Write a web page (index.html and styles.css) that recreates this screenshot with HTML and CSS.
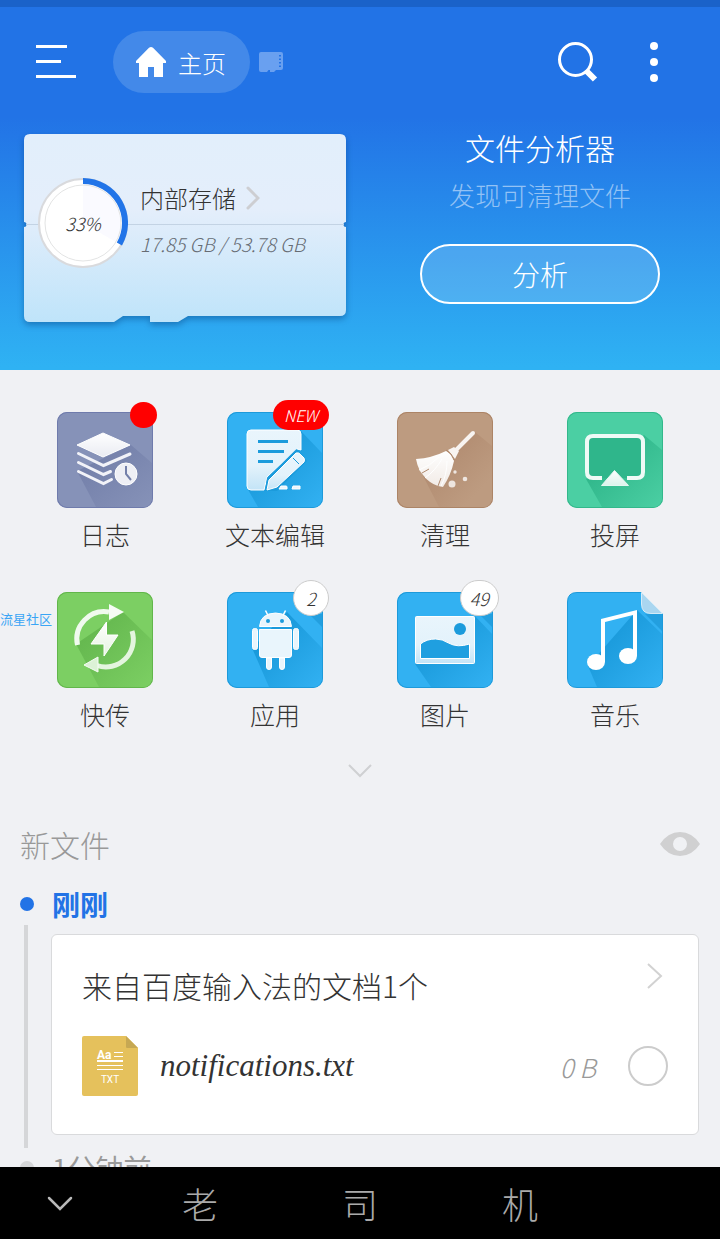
FILE: index.html
```html
<!DOCTYPE html>
<html lang="zh-CN">
<head>
<meta charset="utf-8">
<title>主页</title>
<meta name="viewport" content="width=device-width, initial-scale=1">
<link rel="stylesheet" href="styles.css">
</head>

<body>
<!-- shared gradients for the tile icons -->
<svg class="defs" width="0" height="0" aria-hidden="true">
  <defs>
    <linearGradient id="white" x1="0" y1="0" x2="0" y2="1">
      <stop offset="0" stop-color="#fff"/>
      <stop offset="1" stop-color="#fff" stop-opacity=".82"/>
    </linearGradient>
    <linearGradient id="paper" x1="0" y1="0" x2="0" y2="1">
      <stop offset="0" stop-color="#e9f5fc"/>
      <stop offset=".6" stop-color="#e3f2fb"/>
      <stop offset="1" stop-color="#c3e4f7"/>
    </linearGradient>
    <linearGradient id="shade-blue" x1="0" y1="0" x2="1" y2="1">
      <stop offset=".2" stop-color="#1797d8"/>
      <stop offset="1" stop-color="#32b1f2"/>
    </linearGradient>
    <linearGradient id="shade-purple" x1="0" y1="0" x2="1" y2="1">
      <stop offset=".2" stop-color="#7480aa"/>
      <stop offset="1" stop-color="#8692b8"/>
    </linearGradient>
    <linearGradient id="shade-brown" x1="0" y1="0" x2="1" y2="1">
      <stop offset=".2" stop-color="#b08a6f"/>
      <stop offset=".8" stop-color="#bd9b80"/>
    </linearGradient>
    <linearGradient id="shade-teal" x1="0" y1="0" x2="1" y2="1">
      <stop offset=".2" stop-color="#2db488"/>
      <stop offset="1" stop-color="#4bcfa3"/>
    </linearGradient>
    <linearGradient id="shade-green" x1="0" y1="0" x2="1" y2="1">
      <stop offset=".2" stop-color="#65b84f"/>
      <stop offset="1" stop-color="#7ccf63"/>
    </linearGradient>
    <linearGradient id="card" x1="0" y1="0" x2="0" y2="1">
      <stop offset="0" stop-color="#e2effb"/>
      <stop offset=".4" stop-color="#e4eefb"/>
      <stop offset="1" stop-color="#bfe4fa"/>
    </linearGradient>
  </defs>
</svg>

<main>
  <header>
    <div class="toolbar">
      <button type="button" class="icon-btn" aria-label="菜单">
        <svg width="40" height="34" viewBox="0 0 40 34" fill="#fff">
          <path d="M0 0h31v3H0zM0 15h25v3H0zM0 30h40v3H0z"/>
        </svg>
      </button>
      <button type="button" class="tab">
        <svg width="30" height="30" viewBox="0 0 30 30">
          <path fill="#fff" d="M13 .8q2-1.600 4 0l13 13.200v2h-3v14h-9V20h-6v10H3V16H0v-2z"/>
        </svg>
        主页
      </button>
      <button type="button" class="icon-btn" aria-label="存储卡">
        <svg width="24" height="20" viewBox="0 0 24 20">
          <path fill="#69a0f0" d="M2 0h20q2 0 2 2v14q0 2-2 2h-5l-2 2h-4v-2H9.500l-1.500 2H2q-2 0-2-2V2q0-2 2-2z"/>
          <path stroke="#2273e6" stroke-width="2" stroke-dasharray="1.500 2" d="M21 3v12"/>
        </svg>
      </button>
      <span class="spacer"></span>
      <button type="button" class="icon-btn" aria-label="搜索">
        <svg width="42" height="42" viewBox="0 0 42 42" fill="none" stroke="#fff">
          <circle cx="17.500" cy="18.500" r="16" stroke-width="3"/>
          <path stroke-width="6" d="M28 29.500l9 9"/>
        </svg>
      </button>
      <button type="button" class="icon-btn more" aria-label="更多">
        <svg width="8" height="40" viewBox="0 0 8 40" fill="#fff">
          <circle cx="4" cy="4" r="4"/><circle cx="4" cy="20" r="4"/><circle cx="4" cy="36" r="4"/>
        </svg>
      </button>
    </div>

    <div class="panels">
      <a class="storage" href="#">
        <svg class="storage-bg" width="322" height="188" viewBox="0 0 322 188">
          <path fill="url(#card)" d="M6 0h310q6 0 6 6v82a2.500 2.500 0 0 0 0 5v83q0 6-6 6H164l-10 6h-28v-6H99l-9 6H6q-6 0-6-6V93a2.500 2.500 0 0 0 0-5V6q0-6 6-6z"/>
          <path stroke="#c3d3e4" d="M2 90.500h318"/>
        </svg>
        <span class="usage">
          <svg width="90" height="90" viewBox="0 0 90 90">
            <circle cx="45" cy="45" r="44" fill="#fff" stroke="#d9dadd" stroke-width="2"/>
            <path fill="#fafaff" d="M45 45V7a38 38 0 0 1 33 57z"/>
            <circle cx="45" cy="45" r="38" fill="none" stroke="#e3e4e4"/>
            <path fill="none" stroke="#2174e8" stroke-width="6" d="M45 3a42 42 0 0 1 36.400 63"/>
          </svg>
          <span class="percent">33%</span>
        </span>
        <span class="storage-text">
          <span class="storage-name">内部存储
            <svg width="14" height="24" viewBox="0 0 14 24" fill="none" stroke="#cdced2" stroke-width="3" stroke-linecap="round">
              <path d="M2 2l10 10L2 22"/>
            </svg>
          </span>
          <span class="storage-size">17.85 GB / 53.78 GB</span>
        </span>
      </a>
      <section class="analyzer">
        <h2>文件分析器</h2>
        <p>发现可清理文件</p>
        <button type="button" class="analyze-btn">分析</button>
      </section>
    </div>
  </header>

  <nav class="tiles">
    <a class="tile" href="#">
      <span class="tile-icon purple">
        <svg viewBox="0 0 96 96">
          <path fill="url(#shade-purple)" d="M20 59l19 36h46q10 0 10-10V51L74 33z"/>
          <path fill="url(#white)" stroke="#fff" stroke-linejoin="round" d="M20 33l26-12 27 12-27 12z"/>
          <g fill="none" stroke="#f1f2f8" stroke-width="3" stroke-linecap="round">
            <path d="M21.500 41.500l25 12L73 42M21.500 50.500l25 12 7-3M21.500 59.500l25 12 8-4"/>
          </g>
          <circle cx="69" cy="62" r="11" fill="#eeeff5" stroke="#fff"/>
          <path fill="none" stroke="#7480aa" stroke-width="2" d="M69 54v8l5 6"/>
        </svg>
        <span class="badge dot"></span>
      </span>
      日志
    </a>
    <a class="tile" href="#">
      <span class="tile-icon blue">
        <svg viewBox="0 0 96 96">
          <path fill="url(#shade-blue)" d="M20 76l11 19h54q10 0 10-10V41L73 18z"/>
          <path fill="url(#paper)" stroke="#fff" d="M24 18h46q4 0 4 4v16l-4-1-30 28-3 13H24q-4 0-4-4V22q0-4 4-4z"/>
          <path stroke="#1b9bdc" stroke-width="3" d="M31 29.500h30M31 39.500h26M31 49.500h15"/>
          <path fill="#1b9bdc" d="M69.500 37L40 66l-2 13h12l30-30z"/>
          <path fill="url(#paper)" stroke="#fff" stroke-linejoin="round" d="M69 41q3-1 5 2l3 3q1 2 0 4L50 75l-10 3 2-10z"/>
          <path stroke="#1b9bdc" d="M66 46l6 6"/>
          <path fill="#e9f5fc" stroke="#fff" d="M54 74h5q1 0 1 1v2h-8zM66 74h7v3h-8z"/>
        </svg>
        <span class="badge new">NEW</span>
      </span>
      文本编辑
    </a>
    <a class="tile" href="#">
      <span class="tile-icon brown">
        <svg viewBox="0 0 96 96">
          <path fill="url(#shade-brown)" d="M24 60l18 35h43q10 0 10-10V34L78 20z"/>
          <path stroke="#f8f4f1" stroke-width="4" stroke-linecap="round" d="M76 21L58 39"/>
          <path fill="#f8f4f1" d="M57 35l5 4-4 8-7-9z"/>
          <path fill="url(#white)" d="M19 47q16-1 30-8 6 3 8 10-3 14-11 26l-5-1q-9-3-15-11l-3-4q-3-6-4-12z"/>
          <path fill="none" stroke="#b08a6f" d="M49 38q6 3 8 10M25 61l7-4M41 74l3-8"/>
          <path fill="none" stroke="#fff" d="M22 58q11-4 20-13M28 66q10-7 17-19M44 74q6-11 6-25"/>
          <g fill="#eee6e0">
            <circle cx="55" cy="72" r="3.500"/><circle cx="68" cy="67" r="2.300"/><circle cx="58" cy="60" r="1.700"/>
          </g>
        </svg>
      </span>
      清理
    </a>
    <a class="tile" href="#">
      <span class="tile-icon teal">
        <svg viewBox="0 0 96 96">
          <path fill="url(#shade-teal)" d="M19 67l16 28h50q10 0 10-10V38L77 23z"/>
          <path fill="#2fb68b" d="M20 24h56v42H20z"/>
          <path fill="none" stroke="#effaf6" stroke-width="4" d="M35 66h-9q-6 0-6-6V30q0-6 6-6h44q6 0 6 6v30q0 6-6 6H60"/>
          <path fill="url(#white)" stroke="#e4f7f0" stroke-linejoin="round" d="M47.500 58.500L34.500 73.500h27z"/>
        </svg>
      </span>
      投屏
    </a>
    <a class="tile" href="#">
      <span class="tile-icon green">
        <svg viewBox="0 0 96 96">
          <path fill="url(#shade-green)" d="M19 52l23 43h43q10 0 10-10V48L66 20z"/>
          <g fill="none" stroke="#f0faee" stroke-width="5">
            <path d="M20.500 53A27.500 27.500 0 0 1 52 20"/>
            <path stroke="#e4f5df" d="M75 39a27.500 27.500 0 0 1-35 34.500"/>
          </g>
          <path fill="#f6fcf5" d="M52 12l15 8-15 8z"/>
          <path fill="#dcf2d6" stroke="#f6fcf5" d="M41 65v15l-14-7z"/>
          <path fill="url(#white)" stroke="#fff" d="M49.500 30v13H61L47 64V52H34z"/>
        </svg>
      </span>
      快传
    </a>
    <a class="tile" href="#">
      <span class="tile-icon blue">
        <svg viewBox="0 0 96 96">
          <path fill="url(#shade-blue)" d="M25 56l17 39h43q10 0 10-10V56L60 20z"/>
          <path fill="#239fdf" d="M82 22l13 13V22z"/>
          <g fill="#e9f5fc" stroke="#fff">
            <path d="M32.500 34.500q1-13 16-13.500 15 .5 16 13.500z"/>
            <path d="M32.500 37.500h32V63q0 2.500-2.500 2.500H35q-2.500 0-2.500-2.500z"/>
            <rect x="25.500" y="36.500" width="5" height="21" rx="2"/>
            <rect x="66.500" y="36.500" width="5" height="21" rx="2"/>
            <path d="M39.500 66h5v9q0 2.500-2.500 2.500T39.500 75zM52.500 66h5v9q0 2.500-2.500 2.500T52.500 75z"/>
          </g>
          <path stroke="#fff" stroke-width="1.500" d="M38.500 18.500l2.500 5M58.500 18.500l-2.500 5"/>
          <circle cx="41" cy="29" r="2" fill="#1b9bdc"/>
          <circle cx="55" cy="29" r="2" fill="#1b9bdc"/>
        </svg>
        <span class="badge count">2</span>
      </span>
      应用
    </a>
    <a class="tile" href="#">
      <span class="tile-icon blue">
        <svg viewBox="0 0 96 96">
          <path fill="url(#shade-blue)" d="M18 72l16 23h51q10 0 10-10V42L78 24z"/>
          <path fill="#239fdf" d="M82 22l13 13V22z"/>
          <rect x="18.500" y="24.500" width="59" height="47" rx="1" fill="url(#paper)" stroke="#fff"/>
          <circle cx="63" cy="37" r="6" fill="#1b9bdc"/>
          <path fill="#1f9fe0" stroke="#fff" d="M23.500 66.500V52q6-5 15-5 7 0 13 4 9 5 21 1v14.500z"/>
        </svg>
        <span class="badge count">49</span>
      </span>
      图片
    </a>
    <a class="tile" href="#">
      <span class="tile-icon folded">
        <svg viewBox="0 0 96 96">
          <path fill="#32b1f2" stroke="#1d9ada" d="M10 .5h64.500l21 21V86q0 9.500-9.500 9.500H10Q.5 95.500.5 86V10Q.5.5 10 .5z"/>
          <path fill="url(#shade-blue)" d="M21 74l9 21h55q10 0 10-10V42L70 18z"/>
          <path fill="#239fdf" d="M78 22h17v17z"/>
          <path fill="#a9d6f0" stroke="#d5ebf7" d="M74.500.5l21 21H84q-9.500 0-9.500-9.500z"/>
          <path fill="#fff" d="M34 27l36-9v46h-4V23l-28 7v40h-4z"/>
          <ellipse cx="29" cy="70" rx="9" ry="8" fill="#fff"/>
          <ellipse cx="61" cy="64" rx="9" ry="8" fill="#fff"/>
        </svg>
      </span>
      音乐
    </a>
  </nav>
  <span class="watermark">流星社区</span>

  <button type="button" class="expand" aria-label="展开">
    <svg width="24" height="14" viewBox="0 0 24 14" fill="none" stroke="#cfd0d2" stroke-width="2">
      <path d="M1 1l11 11L23 1"/>
    </svg>
  </button>

  <section class="recent">
    <div class="recent-head">
      <h2>新文件</h2>
      <button type="button" class="icon-btn" aria-label="显示">
        <svg width="40" height="24" viewBox="0 0 40 24">
          <path fill="#d0d0d1" fill-rule="evenodd" d="M0 12Q8 0 20 0t20 12Q32 24 20 24T0 12zm20-7a7 7 0 1 0 0 14 7 7 0 0 0 0-14z"/>
        </svg>
      </button>
    </div>

    <h3 class="time now">刚刚</h3>
    <div class="entry">
      <div class="file-card">
        <a class="file-title" href="#">
          来自百度输入法的文档1个
          <svg width="16" height="26" viewBox="0 0 16 26" fill="none" stroke="#d2d2d2" stroke-width="2">
            <path d="M1 1l13 12L1 25"/>
          </svg>
        </a>
        <div class="file-row">
          <svg width="56" height="60" viewBox="0 0 56 60">
            <path fill="#e5c15c" d="M2 0h42l12 12v46q0 2-2 2H2q-2 0-2-2V2q0-2 2-2z"/>
            <path fill="#c6a853" d="M44 0l12 12H45q-1 0-1-1z"/>
            <text x="15" y="23" class="txt-aa">Aa</text>
            <path stroke="#fff" d="M32 16.500h9M32 20.500h9M15 24.500h26M15 25.500h26M15 29.500h26M15 33.500h26"/>
            <text x="28" y="47" class="txt-ext">TXT</text>
          </svg>
          <label class="file-name" for="file1">notifications.txt</label>
          <span class="file-size">0 B</span>
          <input type="checkbox" class="pick" id="file1">
        </div>
      </div>
    </div>
    <h3 class="time">1分钟前</h3>
  </section>
</main>

<!-- system navigation bar -->
<footer>
  <button type="button" class="icon-btn" aria-label="收起">
    <svg width="26" height="15" viewBox="0 0 26 15" fill="none" stroke="#b9b9b9" stroke-width="2.500" stroke-linecap="round">
      <path d="M2 2l11 11L24 2"/>
    </svg>
  </button>
  <button type="button" class="key">老</button>
  <button type="button" class="key">司</button>
  <button type="button" class="key">机</button>
</footer>
</body>
</html>
```

FILE: styles.css
```css
* {
  box-sizing: border-box;
}

body {
  margin: 0;
  height: 100vh;
  display: flex;
  flex-direction: column;
  font-family: "Noto Sans CJK SC", sans-serif;
  font-weight: 300;
  color: #333;
  background: #f0f1f4;
}

a {
  color: inherit;
  text-decoration: none;
}

button {
  font: inherit;
  color: inherit;
  background: none;
  border: 0;
  padding: 0;
}

h2, h3, p {
  margin: 0;
  font-weight: 300;
}

svg {
  display: block;
  flex: none;
}

.defs {
  position: absolute;
}

main {
  position: relative;
  flex: 1;
  min-height: 0;
  overflow: hidden;
}

/* header */
header {
  border-top: 7px solid #1a62c9;
  background: linear-gradient(#2273e6 110px, #2fb2f3 360px);
  color: #fff;
  padding-bottom: 48px;
}

.toolbar {
  display: flex;
  align-items: center;
  height: 110px;
  padding: 0 62px 0 36px;
}

.tab {
  display: flex;
  align-items: center;
  gap: 12px;
  height: 62px;
  margin: 0 9px 0 37px;
  padding: 0 24px 0 23px;
  border-radius: 31px;
  background: #4389e9;
  font-size: 24px;
}

.spacer {
  flex: 1;
}

.more {
  margin-left: 50px;
}

.panels {
  display: grid;
  grid-template-columns: 1fr 1fr;
  padding-top: 17px;
}

.storage {
  position: relative;
  display: flex;
  align-items: center;
  gap: 12px;
  width: 322px;
  height: 188px;
  margin-left: 24px;
  padding: 0 0 10px 14px;
  color: #333;
}

.storage-bg {
  position: absolute;
  top: 0;
  left: 0;
  filter: drop-shadow(0 3px 3px rgba(0, 50, 110, 0.4));
}

.usage {
  position: relative;
}

.percent {
  position: absolute;
  inset: 0;
  display: flex;
  align-items: center;
  justify-content: center;
  font-size: 18px;
  font-style: italic;
}

.storage-text {
  position: relative;
  display: flex;
  flex-direction: column;
  padding-bottom: 6px;
}

.storage-name {
  display: flex;
  align-items: center;
  gap: 10px;
  font-size: 24px;
  line-height: 48px;
}

.storage-size {
  font-size: 19px;
  font-style: italic;
  line-height: 44px;
  color: #666c74;
}

.analyzer {
  text-align: center;
}

.analyzer h2 {
  font-size: 30px;
  line-height: 26px;
}

.analyzer p {
  margin: 22px 0 36px;
  font-size: 26px;
  line-height: 26px;
  color: #93c2f5;
}

.analyze-btn {
  width: 240px;
  height: 60px;
  border: 2px solid #fff;
  border-radius: 30px;
  background: rgba(255, 255, 255, 0.16);
  font-size: 28px;
}

/* shortcut tiles */
.tiles {
  display: grid;
  grid-template-columns: repeat(4, 1fr);
  row-gap: 32px;
  padding: 42px 20px 0;
}

.tile {
  display: flex;
  flex-direction: column;
  align-items: center;
  font-size: 25px;
  line-height: 52px;
}

.tile-icon {
  position: relative;
  width: 96px;
  height: 96px;
  border-radius: 10px;
}

.tile-icon svg {
  width: 96px;
  height: 96px;
}

.blue { background: #32b1f2; box-shadow: inset 0 0 0 1px #1d9ada; }
.purple { background: #8692b8; box-shadow: inset 0 0 0 1px #6f7bac; }
.brown { background: #bd9b80; box-shadow: inset 0 0 0 1px #ac8466; }
.teal { background: #4bcfa3; box-shadow: inset 0 0 0 1px #33b88b; }
.green { background: #7ccf63; box-shadow: inset 0 0 0 1px #62b64b; }

.badge {
  position: absolute;
  right: -6px;
  top: -12px;
  border-radius: 18px;
  text-align: center;
}

.dot {
  right: -4px;
  top: -10px;
  width: 27px;
  height: 26px;
  background: #f00;
}

.new {
  width: 56px;
  height: 30px;
  background: #f00;
  color: #fff;
  font-size: 16px;
  font-style: italic;
  line-height: 30px;
}

.count {
  min-width: 36px;
  height: 36px;
  padding: 0 9px;
  border: 1px solid #ccc;
  background: #fff;
  font-size: 18px;
  font-style: italic;
  line-height: 34px;
}

.watermark {
  position: absolute;
  left: 0;
  top: 610px;
  font-size: 13px;
  font-weight: 400;
  line-height: 18px;
  color: #3aa5f5;
}

.expand {
  display: block;
  margin: 24px auto 0;
}

/* recent files */
.recent {
  padding: 40px 20px 0;
}

.recent-head {
  display: flex;
  align-items: center;
  justify-content: space-between;
  height: 52px;
}

.recent-head h2 {
  font-size: 30px;
  color: #999;
}

.time {
  display: flex;
  align-items: center;
  gap: 18px;
  height: 40px;
  margin-top: 14px;
  font-size: 28px;
  font-weight: 400;
  color: #999;
}

.time::before {
  content: "";
  width: 14px;
  height: 14px;
  border-radius: 50%;
  background: #d5d6d8;
}

.now {
  font-weight: 700;
  color: #2273e6;
}

.now::before {
  background: #2273e6;
}

.entry {
  margin: 1px 1px -14px 4px;
  padding: 9px 0 13px 23px;
  border-left: 4px solid #d5d6d8;
}

.file-card {
  padding: 28px 30px 38px;
  border: 1px solid #d9dadc;
  border-radius: 6px;
  background: #fff;
}

.file-title {
  display: flex;
  justify-content: space-between;
  height: 73px;
  padding-right: 5px;
  font-size: 30px;
  line-height: 44px;
}

.file-row {
  display: flex;
  align-items: center;
}

.file-name {
  flex: 1;
  margin-left: 22px;
  font: italic 31px "Liberation Serif", serif;
}

.file-size {
  font-size: 26px;
  font-style: italic;
  color: #999;
}

.pick {
  appearance: none;
  width: 40px;
  height: 40px;
  margin: 0 0 0 32px;
  border: 2px solid #ccc;
  border-radius: 50%;
}

.pick:checked {
  background: #2273e6;
}

.txt-aa {
  font: bold 12px Roboto, sans-serif;
  fill: #fff;
}

.txt-ext {
  font: 10px Roboto, sans-serif;
  fill: #fff;
  text-anchor: middle;
}

/* bottom bar */
footer {
  display: grid;
  grid-template-columns: 3fr 4fr 4fr 4fr 3fr;
  align-items: center;
  justify-items: center;
  height: 72px;
  background: #000;
  color: #aaa;
}

.key {
  font-size: 36px;
}
```
